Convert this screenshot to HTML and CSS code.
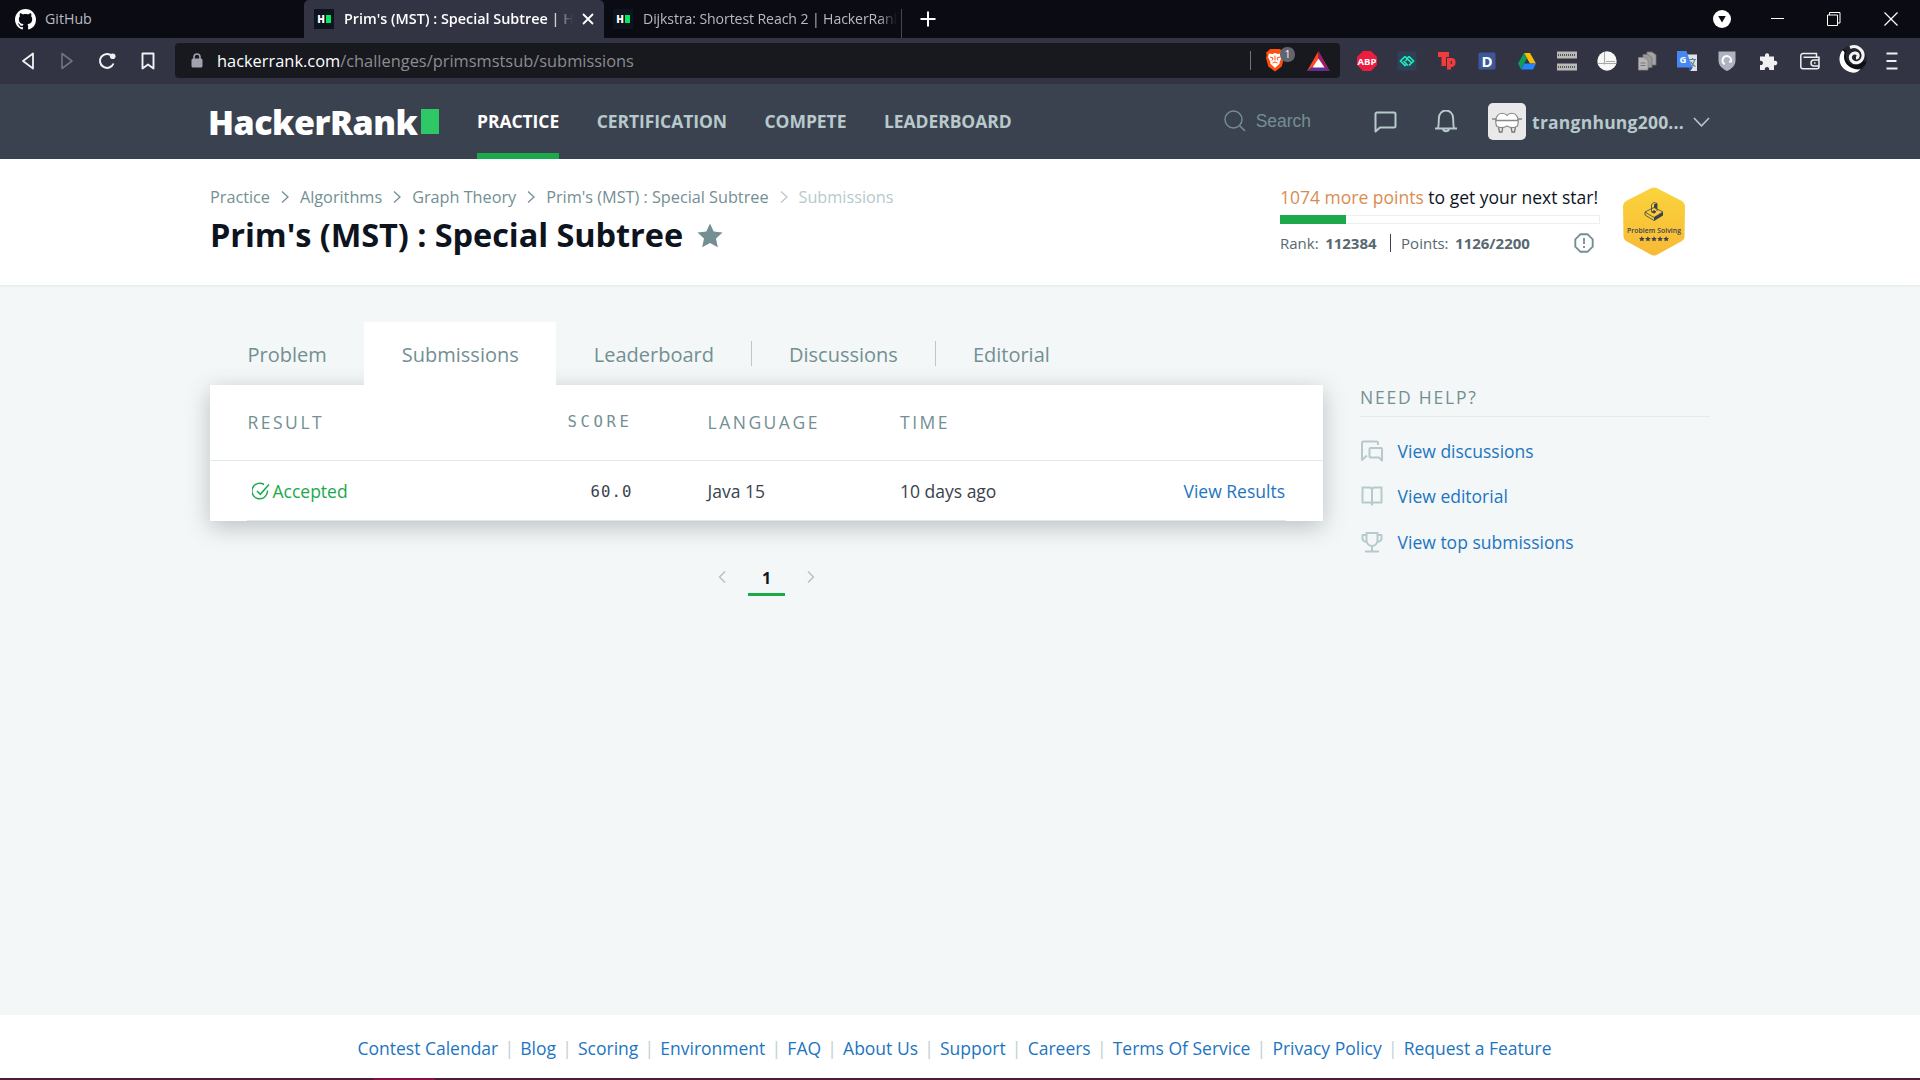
FILE: index.html
```html
<!DOCTYPE html>
<html lang="en">
<head>
<meta charset="utf-8">
<title>Prim's (MST) : Special Subtree | HackerRank</title>
<link rel="stylesheet" href="styles.css">
</head>
<body>
<div class="tabstrip">
  <div class="btab btab-first">
    <svg class="gh" width="21" height="21" viewBox="0 0 16 16"><path fill="#fff" d="M8 0C3.58 0 0 3.58 0 8c0 3.54 2.29 6.53 5.47 7.59.4.07.55-.17.55-.38 0-.19-.01-.82-.01-1.49-2.01.37-2.53-.49-2.69-.94-.09-.23-.48-.94-.82-1.13-.28-.15-.68-.52-.01-.53.63-.01 1.08.58 1.23.82.72 1.21 1.87.87 2.33.66.07-.52.28-.87.51-1.07-1.78-.2-3.64-.89-3.64-3.95 0-.87.31-1.59.82-2.15-.08-.2-.36-1.02.08-2.12 0 0 .67-.21 2.2.82.64-.18 1.32-.27 2-.27s1.36.09 2 .27c1.53-1.04 2.2-.82 2.2-.82.44 1.1.16 1.92.08 2.12.51.56.82 1.27.82 2.15 0 3.07-1.87 3.75-3.65 3.95.29.25.54.73.54 1.48 0 1.07-.01 1.93-.01 2.2 0 .21.15.46.55.38A8.01 8.01 0 0 0 16 8c0-4.42-3.58-8-8-8z"/></svg>
    <span class="btab-title">GitHub</span>
  </div>
  <div class="btab btab-active">
    <span class="favicon"><b>H</b><i></i></span>
    <span class="btab-title t-prim">Prim's (MST) : Special Subtree | Ha</span>
    <svg width="12" height="12" viewBox="0 0 12 12"><path d="M1 1l10 10M11 1L1 11" stroke="#fff" stroke-width="1.8"/></svg>
  </div>
  <div class="btab btab-last">
    <span class="favicon"><b>H</b><i></i></span>
    <span class="btab-title t-dij">Dijkstra: Shortest Reach 2 | HackerRank</span>
  </div>
  <svg class="plus" width="16" height="16" viewBox="0 0 16 16"><path d="M8 .5v15M.5 8h15" stroke="#fff" stroke-width="2"/></svg>
  <div class="winctl">
    <svg class="shield" width="18" height="18" viewBox="0 0 18 18"><circle cx="9" cy="9" r="9" fill="#fff"/><path d="M5.2 6h7.6L9 12.6z" fill="#0b0b14"/></svg>
    <svg width="13" height="14" viewBox="0 0 13 14"><path d="M0 6.5h13" stroke="#fff"/></svg>
    <svg width="14" height="14" viewBox="0 0 14 14"><path d="M.5 3h10v10.500h-10zM2.500 3V.5h10.500v10.500h-2.500" fill="none" stroke="#fff"/></svg>
    <svg width="14" height="14" viewBox="0 0 14 14"><path d="M.5.5l13 13M13.500.5l-13 13" stroke="#fff" stroke-width="1.200"/></svg>
  </div>
</div>

<div class="toolbar">
  <div class="navbtns">
    <svg width="14" height="18" viewBox="0 0 14 18"><path d="M12 1.500v15L2 9z" fill="none" stroke="#f2f2f4" stroke-width="1.800" stroke-linejoin="round"/></svg>
    <svg width="14" height="18" viewBox="0 0 14 18"><path d="M2 1.500v15L12 9z" fill="none" stroke="#70727e" stroke-width="1.600" stroke-linejoin="round"/></svg>
    <svg width="18" height="18" viewBox="0 0 18 18"><path d="M15.500 11.500A7 7 0 1 1 14 4" fill="none" stroke="#f2f2f4" stroke-width="2"/><circle cx="14.700" cy="4.300" r="2.800" fill="#f2f2f4"/></svg>
    <svg width="14" height="18" viewBox="0 0 14 18"><path d="M1.500 1.500h11v15L7 12.500l-5.500 4z" fill="none" stroke="#f2f2f4" stroke-width="1.900" stroke-linejoin="round"/></svg>
  </div>
  <div class="address">
    <svg width="12" height="15" viewBox="0 0 12 15"><path d="M3 6V4a3 3 0 0 1 6 0v2" fill="none" stroke="#a0a3ad" stroke-width="1.600"/><rect x=".5" y="5.500" width="11" height="9" rx="1.500" fill="#a0a3ad"/></svg>
    <span class="url"><span class="host">hackerrank.com</span>/challenges/primsmstsub/submissions</span>
    <span class="addr-sep"></span>
    <span class="brave">
      <svg width="20" height="23" viewBox="0 0 20 23"><path d="M5 0h10l2.500 2.500 1.500 1-.7 3L19 9l-2.300 8.500L10 22.500 3.300 17.500 1 9l.7-2.500-.7-3 1.500-1z" fill="#ff4f0f"/><path d="M4 4.500l3.500.5 2.500-1 2.500 1 3.500-.5 1 3.500-2.500 5 .2 1.500L10 19l-4.700-4.500.2-1.500L3 8z" fill="#fff"/><path d="M5 8l3 1-1 2.500M15 8l-3 1 1 2.500M10 6.500v5M7.500 14l2.500-1 2.500 1" fill="none" stroke="#ff4f0f"/></svg>
      <span class="badge">1</span>
    </span>
    <svg class="bat" width="23" height="20" viewBox="0 0 23 20"><path d="M11.500 0L0 20l11.500-8z" fill="#ff4724"/><path d="M11.500 0L23 20l-11.500-8z" fill="#9e1f63"/><path d="M0 20h23l-6-4.500H6z" fill="#662d91"/><path d="M11.500 7.500L5.500 16.500h12z" fill="#fff"/></svg>
  </div>
  <div class="exts">
    <svg viewBox="0 0 24 24"><path d="M8 2h8l6 6v8l-6 6H8l-6-6V8z" fill="#ed1c40"/><text x="12" y="15.800" font-family="Open Sans, sans-serif" font-weight="700" font-size="9.500" text-anchor="middle" fill="#fff">ABP</text></svg>
    <svg viewBox="0 0 24 24"><rect x="2.500" y="2.500" width="19" height="19" rx="2" fill="#2d4259"/><path d="M10 7.500L5.500 12l4.500 4.500 2-2M14 7.500l4.500 4.500-4.500 4.500M10 7.500l6 6M8.500 12l4.500 4.500M12 9.500l2-2M10.500 12l1.500-2" fill="none" stroke="#1de9b6" stroke-width="1.700"/></svg>
    <svg viewBox="0 0 24 24"><path d="M3 3h11v5h-3v9H6.500V8H3z" fill="#f43b3b"/><path fill-rule="evenodd" d="M12 9H17a4 4 0 0 1 3.500 4.300A4 4 0 0 1 16 18v2.500h-4zM15.700 12v3h1.200v-3z" fill="#f43b3b"/></svg>
    <svg viewBox="0 0 24 24"><rect x="3.500" y="3.500" width="17" height="17" rx="1.500" fill="#3b5998"/><text x="12" y="17.500" font-family="Open Sans, sans-serif" font-weight="700" font-size="15" text-anchor="middle" fill="#fff">D</text></svg>
    <svg viewBox="0 0 24 24"><path d="M9 4h6l6 10.500h-6z" fill="#fbbc04"/><path d="M9 4l3 5.200-6 11L3 14.500z" fill="#0f9d58"/><path d="M9.200 14.500H21L18 20.500H6z" fill="#2684fc"/></svg>
    <svg viewBox="0 0 24 24"><path d="M2 2.500h20v7H2zM2 14.500h20v7H2z" fill="#b9b9b7"/><path d="M3 6h18M3 18h18" stroke="#555" stroke-width="2" stroke-dasharray="1 1"/></svg>
    <svg viewBox="0 0 24 24"><circle cx="12" cy="12" r="9.700" fill="#f7f7f7"/><path d="M9.500 3v12.500M2.500 14.500h19M11 12.500h9" stroke="#a9a9a9" stroke-width="1.100"/></svg>
    <svg viewBox="0 0 24 24"><path d="M12 3h5l4 3v10h-9z" fill="#a5a5a5" stroke="#777" stroke-width=".8"/><path d="M8 5.500h5l4 3v10H8z" fill="#999" stroke="#777" stroke-width=".8"/><path d="M3.500 8.500h5.500l4 3v9.500H3.500z" fill="#b5b5b5" stroke="#888" stroke-width=".8"/><path d="M5.500 14h5M5.500 16.500h5" stroke="#777"/></svg>
    <svg viewBox="0 0 24 24"><path d="M11 5.500h11v16.500H15z" fill="#dfe3e6"/><path d="M14 10.500h7M17.500 9v1.500M15 18c3-2 4-4 4.500-7M15.500 12.500c1 2.500 2.500 4 5 5" fill="none" stroke="#607d8b" stroke-width="1.200"/><path d="M15.500 22l-3-4.500h5.500z" fill="#2849c4"/><path d="M2 2h9.500l5.500 16.500H2z" fill="#4688f1"/><text x="8" y="13.800" font-family="Open Sans, sans-serif" font-weight="700" font-size="9.500" text-anchor="middle" fill="#fff">G</text></svg>
    <svg viewBox="0 0 24 24"><path d="M3.500 2.500h17v9c0 5-4 8.500-8.500 10.500-4.500-2-8.500-5.500-8.500-10.500z" fill="#aeb3c0"/><path d="M9.800 15.200A4.300 4.300 0 1 1 16 12.500l-2 .2" fill="none" stroke="#fff" stroke-width="2"/></svg>
    <svg class="puzzle" viewBox="0 0 24 24"><path d="M4 7.500h5.200c-1.500-4.500 5.200-4.500 3.800 0H18V12c4.500-1.500 4.500 5.500 0 4.200V21h-4.800c.8-4-5.200-4-4.400 0H4v-5c4 .8 4-5 0-4.200z" fill="#f0f0f2"/></svg>
    <svg class="wallet" viewBox="0 0 24 24"><path d="M18.500 8V4.500H5A2.300 2.300 0 0 0 2.800 7v10.500A2.300 2.300 0 0 0 5 19.800h14a2 2 0 0 0 2-2V8.200H5.500M21.500 11h-5.500a3 3 0 0 0 0 6h5.500M16 14h1.500" fill="none" stroke="#eeeef0" stroke-width="1.500"/></svg>
    <svg class="avatar-ext" viewBox="0 0 28 28"><circle cx="14" cy="14" r="13.800" fill="#22252d"/><path d="M6 5C2.500 12 6 19 12 21.500s12-1 13.500-5" fill="none" stroke="#0c0e13" stroke-width="4"/><path d="M3.500 5.500C-2 12-1 25 14 27.800c3 .2 6-1.500 7.500-3.500C13 25.500 2.500 19 5.500 8c0-1.500-1-2.500-2-2.500z" fill="#fff"/><path d="M11 2.500C18-.5 25 5 24 11.500 23 18 15.500 19.500 12.500 15.500 9.500 11.500 13 7.500 16.500 8c3.500.5 3.500 5 .5 5" fill="none" stroke="#f5f5f5" stroke-width="3"/></svg>
    <svg class="menu" viewBox="0 0 12 18"><path d="M.5 1.500h11M.5 9h10M.5 16.500h11" stroke="#f0f0f2" stroke-width="2"/></svg>
  </div>
</div>

<header class="nav">
  <a class="logo"><span class="logo-text">HackerRank</span><i></i></a>
  <nav class="menu-main">
    <a class="on">PRACTICE</a><a>CERTIFICATION</a><a>COMPETE</a><a>LEADERBOARD</a>
  </nav>
  <div class="nav-right">
    <svg class="glass" width="22" height="22" viewBox="0 0 22 22"><circle cx="9.500" cy="9.500" r="8.500" fill="none" stroke="#738f93" stroke-width="1.400"/><path d="M15.700 15.700L21 21" stroke="#738f93" stroke-width="1.600"/></svg>
    <span class="search">Search</span>
    <svg class="chat" width="23" height="22" viewBox="0 0 23 22"><path d="M1.500 20.500V3a1.500 1.500 0 0 1 1.500-1.500h17A1.500 1.500 0 0 1 21.500 3v12a1.500 1.500 0 0 1-1.500 1.500H6z" fill="none" stroke="#b7c9cc" stroke-width="2" stroke-linejoin="round"/></svg>
    <svg class="bell" width="24" height="23" viewBox="0 0 24 23"><path d="M1 18.500h22M4 18c1-2.500.5-7 1-10.500a7 7 0 0 1 14 0c.5 3.500 0 8 1 10.500M9 19c.5 3 5.500 3 6 0" fill="none" stroke="#b7c9cc" stroke-width="1.900" stroke-linejoin="round"/></svg>
    <svg class="user-pic" width="38" height="37" viewBox="0 0 38 37"><rect width="38" height="37" rx="5" fill="#e9e9ea"/><path d="M10.500 24l1 5H14l.8-5M23 24l1 5h2.500l1-5" fill="none" stroke="#777" stroke-width="1.300"/><path d="M19 12.500c2-3 7.500-3 9.500 0s2.500 6 1 10.500c-3 2-7 2-10.500 0-3.500 2-7.500 2-10.500 0-1.500-4.500-1-7.500 1-10.500s7.500-3 9.500 0z" fill="#fff" stroke="#888" stroke-width="1.200"/><path d="M4 16h3.500l1 1.500h21l1-1.500H34" fill="none" stroke="#888" stroke-width="1.300"/></svg>
    <span class="username">trangnhung200...</span>
    <svg class="chev" width="17" height="10" viewBox="0 0 17 10"><path d="M1 1l7.500 7.800L16 1" fill="none" stroke="#b7c9cc" stroke-width="1.500"/></svg>
  </div>
</header>

<section class="page-head">
  <div class="head-left">
    <div class="crumbs">
      <a>Practice</a><svg viewBox="0 0 8 12"><path d="M1 .5L7 6l-6 5.500"/></svg>
      <a>Algorithms</a><svg viewBox="0 0 8 12"><path d="M1 .5L7 6l-6 5.500"/></svg>
      <a>Graph Theory</a><svg viewBox="0 0 8 12"><path d="M1 .5L7 6l-6 5.500"/></svg>
      <a>Prim's (MST) : Special Subtree</a><svg class="dim" viewBox="0 0 8 12"><path d="M1 .5L7 6l-6 5.500"/></svg>
      <a class="dim">Submissions</a>
    </div>
    <h1><span>Prim's (MST) : Special Subtree</span>
      <svg width="26" height="25" viewBox="0 0 26 25"><path d="M13 .5l3.700 8 8.800 1-6.500 6 1.800 8.800L13 19.900l-7.800 4.400L7 15.500l-6.500-6 8.800-1z" fill="#738f93"/></svg></h1>
  </div>
  <div class="progress">
    <p class="next"><b>1074 more points</b> to get your next star!</p>
    <div class="bar"><i></i></div>
    <div class="stats"><span>Rank:</span><b class="rank">112384</b><em></em><span>Points:</span><b>1126/2200</b>
      <svg width="20" height="20" viewBox="0 0 20 20"><path d="M6.300 1.300h7.400l5 5v7.400l-5 5H6.300l-5-5V6.300z" fill="none" stroke="#738f93" stroke-width="1.900" stroke-linejoin="round"/><path d="M10 5v6M10 13v2" stroke="#738f93" stroke-width="1.800"/></svg></div>
  </div>
  <svg class="hex" width="62" height="69" viewBox="0 0 62 69">
    <defs><linearGradient id="gold" x1="0" y1="0" x2="0" y2="1"><stop offset="0" stop-color="#fad43c"/><stop offset="1" stop-color="#f8b936"/></linearGradient></defs>
    <path d="M28.500 1Q31 0 33.500 1L59 14Q62 16 62 19L61.500 50Q61.500 52 59 54L33.500 68Q31 69 28.500 68L3 54Q.5 52 .5 50L0 19Q0 16 3 14z" fill="url(#gold)"/>
    <g fill="none" stroke="#39424e" stroke-width=".8"><path d="M22 25l9-4.500 9 4.500-9 5.500zM22 25v3l9 5.500"/><path d="M28.500 25.500v-8l2.500-2 3 1v7.500"/><path d="M29 25l2-1.500 2 1.300-2 1.400z" fill="#39424e"/></g><path d="M31 30.500l9-5.500v3.500L31 34zM31 17.500l3-1.500v6l-3-1.500z" fill="#39424e"/>
    <text x="31" y="45.500" font-family="Open Sans, sans-serif" font-weight="600" font-size="6.800" text-anchor="middle" fill="#39424e" textLength="54">Problem Solving</text>
    <g fill="#39424e"><path id="st" d="M18.800 49.200l.9 1.700 1.900.2-1.400 1.300.4 1.900-1.800-.9-1.800.9.4-1.900-1.400-1.300 1.900-.2z"/><use href="#st" x="6.100"/><use href="#st" x="12.200"/><use href="#st" x="18.300"/><use href="#st" x="24.400"/></g>
  </svg>
</section>

<main class="main">
  <div class="content">
    <div class="tabs"><a>Problem</a><a class="on">Submissions</a><a>Leaderboard</a><i></i><a>Discussions</a><i></i><a>Editorial</a></div>
    <div class="card">
      <div class="row head"><span>RESULT</span><span class="score">SCORE</span><span>LANGUAGE</span><span>TIME</span><span></span></div>
      <div class="row data">
        <span class="ok"><svg width="18" height="19" viewBox="0 0 18 19"><path d="M15.500 8.500A7.800 7.800 0 1 1 12 2.500" fill="none" stroke="#1ba94c" stroke-width="1.500"/><path d="M5 9l3.300 3.300L17 2.500" fill="none" stroke="#1ba94c" stroke-width="1.500"/></svg><span>Accepted</span></span>
        <span class="score">60.0</span><span>Java 15</span><span>10 days ago</span><a>View Results</a></div>
    </div>
    <div class="pager">
      <svg class="prev" width="8" height="12" viewBox="0 0 8 12"><path d="M7 .5L1.500 6 7 11.500"/></svg>
      <b>1</b>
      <svg width="8" height="12" viewBox="0 0 8 12"><path d="M1 .5L6.500 6 1 11.500"/></svg>
    </div>
  </div>
  <aside class="help">
    <h2><span>NEED HELP?</span></h2>
    <div class="help-row"><svg width="24" height="24" viewBox="0 0 24 24"><path d="M18 6V4a1.500 1.500 0 0 0-1.500-1.500H3.500A1.500 1.500 0 0 0 2 4v17l5-4.500M10.500 9H21a1 1 0 0 1 1 1v11.500l-3-3h-8.500a1 1 0 0 1-1-1V10a1 1 0 0 1 1-1z"/></svg><a>View discussions</a></div>
    <div class="help-row"><svg width="24" height="24" viewBox="0 0 24 24"><path d="M12 21.500V6.500c0-1.500-1-3-2.500-3H2.500v15h7.500c1.500 0 2 1 2 2 0-1 .5-2 2-2h7.500v-15h-7C13 3.500 12 5 12 6.500"/></svg><a>View editorial</a></div>
    <div class="help-row"><svg width="24" height="24" viewBox="0 0 24 24"><path d="M6.500 3h11v7.500a5.500 5.500 0 0 1-11 0zM6.500 5H2.500v3.500a3 3 0 0 0 4 3M17.500 5h4v3.500a3 3 0 0 1-4 3M12 16v5M5 21.500h14"/></svg><a>View top submissions</a></div>
  </aside>
</main>

<footer class="footer">
  <a>Contest Calendar</a><i>|</i><a>Blog</a><i>|</i><a>Scoring</a><i>|</i><a>Environment</a><i>|</i><a>FAQ</a><i>|</i><a>About Us</a><i>|</i><a>Support</a><i>|</i><a>Careers</a><i>|</i><a>Terms Of Service</a><i>|</i><a>Privacy Policy</a><i>|</i><a>Request a Feature</a>
</footer>
<div class="taskbar"><i></i></div>
</body>
</html>
```
FILE: styles.css
```css
* { box-sizing: border-box; }
body { margin: 0; width: 1920px; height: 1080px; overflow: hidden; display: flex; flex-direction: column; background: #f3f7f7; font-family: "Open Sans", sans-serif; color: #39424e; }
svg { display: block; flex: none; }
i, em { font-style: normal; }
h1, h2, p { margin: 0; }
span, a, b { white-space: nowrap; }

/* browser tab strip */
.tabstrip { height: 38px; flex: none; background: #0b0b14; display: flex; align-items: center; }
.btab { height: 38px; display: flex; align-items: center; font-size: 14.2px; color: #b9b9bf; flex: none; }
.btab-title { padding-bottom: 1px; }
.btab-first { width: 304px; padding-left: 15px; gap: 9px; }
.btab-active { width: 300px; padding-left: 10px; background: #323443; border-radius: 5px 5px 0 0; color: #fff; font-weight: 600; }
.btab-last { width: 298px; padding-left: 9px; }
.btab-last::after { content: ""; width: 1px; height: 29px; background: #45464f; margin: 9px 0 0 auto; }
.favicon { width: 20px; height: 20px; background: #0e141e; display: flex; align-items: center; justify-content: center; gap: 1px; flex: none; margin-right: 10px; }
.favicon b { font-size: 10px; font-weight: 800; line-height: 10px; color: #fff; }
.favicon i { width: 5px; height: 8px; background: #00ea64; }
.t-prim { width: 229px; margin-right: 9px; font-size: 14.4px; -webkit-mask-image: linear-gradient(90deg, #000 90%, transparent); mask-image: linear-gradient(90deg, #000 90%, transparent); }
.t-dij { width: 254px; font-size: 14.1px; letter-spacing: -.1px; -webkit-mask-image: linear-gradient(90deg, #000 93%, transparent); mask-image: linear-gradient(90deg, #000 93%, transparent); }
.plus { margin-left: 18px; }
.winctl { margin-left: auto; display: flex; align-items: center; gap: 43px; padding-right: 22px; }
.shield { margin-right: -3px; }

/* browser toolbar */
.toolbar { height: 46px; flex: none; background: #323443; display: flex; align-items: center; padding-bottom: 1px; }
.navbtns { width: 175px; padding-left: 21px; display: flex; gap: 24.5px; align-items: center; }
.address { width: 1165px; height: 35px; background: #17191f; border-radius: 4px; display: flex; align-items: center; padding-left: 16px; }
.url { margin-left: 14px; font-size: 16.4px; color: #8b8c90; padding-bottom: 1px; }
.host { color: #fff; }
.addr-sep { width: 1px; height: 19px; background: #74757c; margin-left: auto; }
.brave { margin-left: 14px; position: relative; width: 31px; height: 23px; }
.badge { position: absolute; left: 15px; top: -2px; width: 15px; height: 15px; border-radius: 7px; background: #62646f; color: #fff; font-size: 10px; line-height: 15px; text-align: center; }
.bat { margin: 0 10px 0 11px; }
.exts { display: flex; align-items: center; padding-left: 15px; gap: 16px; }
.exts svg { width: 24px; height: 24px; }
.exts .puzzle { margin-left: 1px; }
.exts .wallet { margin-left: 2px; }
.exts .avatar-ext { width: 28px; height: 28px; margin: -3px 0 0 1px; }
.exts .menu { width: 12px; height: 18px; margin-left: 3px; }

/* site navigation */
.nav { height: 75px; flex: none; background: #3b424f; display: flex; padding: 0 210px 0 208px; }
.logo { display: flex; align-items: center; width: 269px; }
.logo-text { font-size: 34px; font-weight: 800; letter-spacing: -.5px; color: #fff; width: 213px; }
.logo i { width: 18px; height: 25px; background: #2ec866; }
.menu-main { display: flex; gap: 37.5px; }
.menu-main a { height: 75px; line-height: 75px; font-size: 17.5px; letter-spacing: -.06px; font-weight: 700; color: #b7c9cc; }
.menu-main .on { color: #fff; box-shadow: inset 0 -6px #1ba94c; }
.nav-right { margin-left: auto; display: flex; align-items: center; }
.glass { margin-top: -2px; }
.search { font-family: "Liberation Sans", sans-serif; font-size: 17.5px; color: #738f93; margin-left: 10px; }
.chat { margin-left: 63px; }
.bell { margin-left: 37px; }
.user-pic { margin-left: 30px; }
.username { font-size: 17.5px; font-weight: 700; letter-spacing: .22px; color: #b7c9cc; margin-left: 6px; }
.chev { margin-left: 9px; }

/* challenge header */
.page-head { height: 126px; flex: none; background: #fff; padding: 0 235px 0 210px; display: flex; box-shadow: 0 1px 3px rgba(57,66,78,.09); }
.head-left { padding-top: 26px; }
.crumbs { display: flex; align-items: center; height: 24px; font-size: 16.25px; letter-spacing: -.01px; color: #738f93; }
.crumbs svg { width: 8px; height: 12px; margin: 0 11px; fill: none; stroke: #738f93; stroke-width: 1.3; }
.crumbs .dim { color: #b7c9cc; stroke: #b7c9cc; }
h1 { display: flex; align-items: center; gap: 14px; font-size: 32.5px; letter-spacing: -.07px; line-height: 44px; font-weight: 700; color: #0e141e; margin-top: 4px; }
.progress { margin-left: auto; width: 320px; padding-top: 26px; }
.next { font-size: 17.5px; line-height: 24px; color: #0e141e; }
.next b { font-weight: 400; color: #d88d4f; }
.bar { height: 9px; border: 1px solid #eceff0; margin-top: 6px; }
.bar i { display: block; width: 66px; height: 9px; margin: -1px; background: #1ba94c; }
.stats { display: flex; align-items: center; font-size: 15px; height: 30px; margin-top: 4px; color: #576871; }
.stats b { margin-left: 6.5px; }
.stats em { width: 1px; height: 18px; background: #39424e; margin: 0 10.5px 0 13px; }
.stats svg { margin-left: auto; margin-right: 6.5px; }
.hex { margin: 28px 0 0 23px; }

/* main area */
.main { flex: 1; display: flex; padding: 37px 210px 0; }
.content { width: 1113px; }
.tabs { display: flex; height: 63px; align-items: center; font-size: 20px; color: #738f93; }
.tabs a { padding: 0 37.5px; height: 63px; line-height: 65px; }
.tabs .on { background: #fff; position: relative; z-index: 1; }
.tabs i { width: 1px; height: 25px; background: #b7c9cc; margin-right: -1px; }
.card { background: #fff; height: 136px; box-shadow: 0 6px 22px rgba(57,66,78,.3); }
.row { display: grid; grid-template-columns: 320px 140px 192.5px 283.5px 1fr; padding: 0 37.5px; align-items: center; font-size: 17.5px; }
.head { height: 76px; border-bottom: 1px solid #e2e9ea; color: #738f93; letter-spacing: 2.5px; padding-bottom: 2px; }
.data { height: 60px; position: relative; }
.data::after { content: ""; position: absolute; left: 37px; right: 37px; bottom: 0; height: 1px; background: #dfe8ea; }
.ok { display: flex; align-items: center; color: #1ba94c; padding-left: 4px; gap: 3px; }
.score { font-family: "DejaVu Sans Mono", monospace; font-size: 15.6px; letter-spacing: 3.6px; padding-top: 1px; }
.data .score { padding-left: 23px; letter-spacing: 1.1px; }
.row a, .help a, .footer a { color: #1d75c1; }
.pager { display: flex; justify-content: center; align-items: center; height: 52px; margin-top: 30px; }
.pager svg { fill: none; stroke: #b5bfc4; stroke-width: 1.4; }
.pager .prev { margin-left: -1px; }
.pager b { width: 37px; height: 38px; margin: 0 21.5px 0 22.5px; border-bottom: 3px solid #1ba94c; text-align: center; line-height: 40px; font-size: 16px; color: #0e141e; }
.help { margin-left: 37px; width: 350px; padding-top: 63px; }
.help h2 { font-size: 17.5px; font-weight: 400; color: #738f93; letter-spacing: 1.8px; line-height: 24px; height: 32px; border-bottom: 1px solid #e4eaeb; margin-bottom: 11px; }
.help-row { height: 45.5px; display: flex; align-items: center; gap: 13.6px; font-size: 17.5px; }
.help-row svg { fill: none; stroke: #b7c9cc; stroke-width: 2; stroke-linejoin: round; }

.footer { height: 63px; flex: none; background: #fff; display: flex; align-items: center; justify-content: center; font-size: 17.5px; padding: 2px 11px 0 0; }
.footer i { width: 22px; text-align: center; color: #c2cfd1; }
.taskbar { height: 2px; flex: none; background: #4f1b36; }
.taskbar i { display: block; width: 61px; height: 2px; margin-left: 374px; background: #881144; }
```
